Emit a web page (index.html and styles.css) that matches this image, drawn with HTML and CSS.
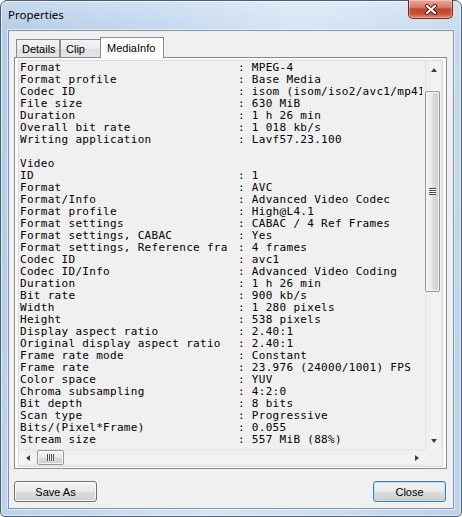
FILE: index.html
```html
<!DOCTYPE html>
<html lang="en">
<head>
<meta charset="utf-8">
<title>Properties</title>
<link rel="stylesheet" href="styles.css">
</head>
<body>
<div class="window">
  <div class="titlebar">
    <span class="title">Properties</span>
    <div class="close-btn">
      <svg width="14" height="11" viewBox="0 0 14 11">
        <path d="M3 2 L11 9 M11 2 L3 9" stroke="#5b2219" stroke-width="4.2" stroke-linecap="round" fill="none"/>
        <path d="M3 2 L11 9 M11 2 L3 9" stroke="#ffffff" stroke-width="2.2" stroke-linecap="round" fill="none"/>
      </svg>
    </div>
  </div>

  <div class="client">
    <div class="tabs">
      <div class="tab">Details</div>
      <div class="tab">Clip</div>
      <div class="tab active">MediaInfo</div>
    </div>

    <div class="panel">
      <div class="infobox">
        <div class="viewport">
          <div class="lines">
            <div class="row"><span class="k">Format</span>: MPEG-4</div>
            <div class="row"><span class="k">Format profile</span>: Base Media</div>
            <div class="row"><span class="k">Codec ID</span>: isom (isom/iso2/avc1/mp41)</div>
            <div class="row"><span class="k">File size</span>: 630 MiB</div>
            <div class="row"><span class="k">Duration</span>: 1 h 26 min</div>
            <div class="row"><span class="k">Overall bit rate</span>: 1 018 kb/s</div>
            <div class="row"><span class="k">Writing application</span>: Lavf57.23.100</div>
            <div class="row">&nbsp;</div>
            <div class="row">Video</div>
            <div class="row"><span class="k">ID</span>: 1</div>
            <div class="row"><span class="k">Format</span>: AVC</div>
            <div class="row"><span class="k">Format/Info</span>: Advanced Video Codec</div>
            <div class="row"><span class="k">Format profile</span>: High@L4.1</div>
            <div class="row"><span class="k">Format settings</span>: CABAC / 4 Ref Frames</div>
            <div class="row"><span class="k">Format settings, CABAC</span>: Yes</div>
            <div class="row"><span class="k">Format settings, Reference fra</span>: 4 frames</div>
            <div class="row"><span class="k">Codec ID</span>: avc1</div>
            <div class="row"><span class="k">Codec ID/Info</span>: Advanced Video Coding</div>
            <div class="row"><span class="k">Duration</span>: 1 h 26 min</div>
            <div class="row"><span class="k">Bit rate</span>: 900 kb/s</div>
            <div class="row"><span class="k">Width</span>: 1 280 pixels</div>
            <div class="row"><span class="k">Height</span>: 538 pixels</div>
            <div class="row"><span class="k">Display aspect ratio</span>: 2.40:1</div>
            <div class="row"><span class="k">Original display aspect ratio</span>: 2.40:1</div>
            <div class="row"><span class="k">Frame rate mode</span>: Constant</div>
            <div class="row"><span class="k">Frame rate</span>: 23.976 (24000/1001) FPS</div>
            <div class="row"><span class="k">Color space</span>: YUV</div>
            <div class="row"><span class="k">Chroma subsampling</span>: 4:2:0</div>
            <div class="row"><span class="k">Bit depth</span>: 8 bits</div>
            <div class="row"><span class="k">Scan type</span>: Progressive</div>
            <div class="row"><span class="k">Bits/(Pixel*Frame)</span>: 0.055</div>
            <div class="row"><span class="k">Stream size</span>: 557 MiB (88%)</div>
          </div>
        </div>

        <div class="vscroll">
          <div class="sb-btn"><span class="tri up"></span></div>
          <div class="sb-track v">
            <div class="thumb v-thumb"><span class="grip-h"></span></div>
          </div>
          <div class="sb-btn"><span class="tri down"></span></div>
        </div>

        <div class="hscroll">
          <div class="sb-btn"><span class="tri left"></span></div>
          <div class="sb-track h">
            <div class="thumb h-thumb"><span class="grip-v"></span></div>
          </div>
          <div class="sb-btn"><span class="tri right"></span></div>
        </div>

        <div class="corner"></div>
      </div>
    </div>

    <div class="buttons">
      <button class="btn">Save As</button>
      <button class="btn default">Close</button>
    </div>
  </div>
</div>
</body>
</html>
```

FILE: styles.css
```css
html, body {
  margin: 0;
  padding: 0;
  background: #ffffff;
}

/* ---------- window frame ---------- */
.window {
  width: 462px;
  height: 517px;
  box-sizing: border-box;
  border: 1px solid #4d5d72;
  border-radius: 7px 7px 5px 5px;
  padding: 0 7px 7px 7px;
  display: flex;
  flex-direction: column;
  background:
    linear-gradient(180deg, rgba(255,255,255,0.25) 0px, rgba(255,255,255,0) 30px),
    linear-gradient(100deg, #b4cce6 0%, #c3d8ee 30%, #d6e5f5 55%, #cfe0f2 70%, #bcd2ea 100%);
  box-shadow: inset 0 0 0 1px rgba(255,255,255,0.55);
  font-family: "Liberation Sans", Arial, sans-serif;
}

.titlebar {
  height: 29px;
  display: flex;
  align-items: flex-start;
}

.title {
  font-family: "Noto Sans", "Liberation Sans", sans-serif;
  font-size: 11.5px;
  line-height: 14px;
  color: #000;
  padding-top: 7px;
}

.close-btn {
  margin-left: auto;
  margin-right: 1px;
  margin-top: -1px;
  width: 45px;
  height: 19px;
  box-sizing: border-box;
  border: 1px solid #6e2a20;
  border-top: none;
  border-radius: 0 0 5px 5px;
  background: linear-gradient(180deg, #e8a696 0%, #d77e6b 40%, #c5452f 50%, #c84d35 75%, #dc8a6f 100%);
  box-shadow: inset 0 0 0 1px rgba(255,255,255,0.35);
  display: flex;
  align-items: center;
  justify-content: center;
}

.close-btn svg {
  display: block;
  margin-top: 1px;
}

/* ---------- client area ---------- */
.client {
  flex: 1;
  border: 1px solid #8194ad;
  box-shadow: 0 0 0 1px rgba(255,255,255,0.5);
  background: #f0f0f0;
  display: flex;
  flex-direction: column;
  padding: 0 6px 0 5px;
}

.tabs {
  display: flex;
  align-items: flex-end;
  height: 20px;
  margin-top: 6px;
  padding-left: 2px;
  position: relative;
  z-index: 1;
}

.tab {
  box-sizing: border-box;
  height: 18px;
  border: 1px solid #898c95;
  border-bottom: none;
  background: linear-gradient(180deg, #f3f3f3 0%, #ebebeb 50%, #dedede 51%, #e5e5e5 100%);
  font-size: 11px;
  line-height: 16px;
  padding: 1px 5px 0 5px;
  color: #000;
}

.tab:first-child {
  width: 44px;
}

.tab:nth-child(2) {
  width: 41px;
}

.tab.active {
  height: 21px;
  width: 64px;
  margin-left: -1px;
  margin-bottom: -1px;
  background: #ffffff;
  padding: 2px 6px 0 6px;
  text-align: left;
}

.panel {
  box-sizing: border-box;
  height: 412px;
  border: 1px solid #898c95;
  background: #fbfbfb;
  padding: 2px 3px 1px 3px;
  display: flex;
}

/* ---------- text box with scrollbars ---------- */
.infobox {
  flex: 1;
  box-sizing: border-box;
  border: 1px solid #dcdcdc;
  background: #f0f0f0;
  display: grid;
  grid-template-columns: 1fr 17px;
  grid-template-rows: 1fr 17px;
}

.viewport {
  grid-column: 1;
  grid-row: 1;
  padding: 1px 3px 0 1px;
  min-width: 0;
  min-height: 0;
}

.lines {
  height: 100%;
  overflow: hidden;
  font-family: "DejaVu Sans Mono", "Liberation Mono", monospace;
  font-size: 11px;
  letter-spacing: 0.3px;
  line-height: 12px;
  color: #000;
}

.row {
  display: flex;
  white-space: pre;
  height: 12px;
}

.k {
  flex: none;
  width: 218px;
}

.vscroll {
  grid-column: 2;
  grid-row: 1;
  display: flex;
  flex-direction: column;
  background: linear-gradient(90deg, #e3e3e3 0px, #eeeeee 2px, #f4f4f4 9px, #f1f1f1 15px, #e6e6e6 17px);
}

.hscroll {
  grid-column: 1;
  grid-row: 2;
  display: flex;
  background: linear-gradient(180deg, #e3e3e3 0px, #eeeeee 2px, #f4f4f4 9px, #f1f1f1 15px, #e6e6e6 17px);
}

.corner {
  grid-column: 2;
  grid-row: 2;
  background: #f0f0f0;
}

.sb-btn {
  flex: none;
  width: 17px;
  height: 17px;
  display: flex;
  align-items: center;
  justify-content: center;
}

.sb-track {
  flex: 1;
  position: relative;
}

.sb-track.v {
  padding-top: 13px;
}

.sb-track.h {
  padding-left: 1px;
  display: flex;
  align-items: center;
}

.thumb {
  box-sizing: border-box;
  border: 1px solid #979797;
  border-radius: 2px;
  display: flex;
  align-items: center;
  justify-content: center;
}

.v-thumb {
  width: 15px;
  height: 201px;
  margin-left: 0;
  background: linear-gradient(90deg, #f2f2f2 0%, #ebebeb 45%, #d9d9d9 55%, #d2d2d2 100%);
  box-shadow: inset 0 0 0 1px rgba(255,255,255,0.7);
}

.h-thumb {
  width: 27px;
  height: 15px;
  background: linear-gradient(180deg, #f2f2f2 0%, #ebebeb 45%, #d9d9d9 55%, #d2d2d2 100%);
  box-shadow: inset 0 0 0 1px rgba(255,255,255,0.7);
}

/* grip lines on the thumbs */
.grip-h {
  width: 7px;
  height: 7px;
  background: repeating-linear-gradient(180deg, #4b4b4b 0px, #4b4b4b 1px, #f4f4f4 1px, #f4f4f4 2px);
}

.grip-v {
  width: 7px;
  height: 7px;
  background: repeating-linear-gradient(90deg, #4b4b4b 0px, #4b4b4b 1px, #f4f4f4 1px, #f4f4f4 2px);
}

/* arrow glyphs */
.tri {
  width: 0;
  height: 0;
  border-style: solid;
}

.tri.up {
  border-width: 0 3.5px 4px 3.5px;
  border-color: transparent transparent #3e3e3e transparent;
}

.tri.down {
  border-width: 4px 3.5px 0 3.5px;
  border-color: #3e3e3e transparent transparent transparent;
}

.tri.left {
  border-width: 3.5px 4px 3.5px 0;
  border-color: transparent #3e3e3e transparent transparent;
}

.tri.right {
  border-width: 3.5px 0 3.5px 4px;
  border-color: transparent transparent transparent #3e3e3e;
}

/* ---------- dialog buttons ---------- */
.buttons {
  display: flex;
  justify-content: space-between;
  margin-top: 12px;
  padding-right: 1px;
}

.btn {
  box-sizing: border-box;
  height: 21px;
  border: 1px solid #707070;
  border-radius: 3px;
  background: linear-gradient(180deg, #f2f2f2 0%, #ebebeb 48%, #dddddd 52%, #cfcfcf 100%);
  box-shadow: inset 0 0 0 1px rgba(255,255,255,0.8);
  font-family: "Liberation Sans", Arial, sans-serif;
  font-size: 11px;
  color: #000;
  padding: 0;
  margin: 0;
}

.btn:first-child {
  width: 83px;
}

.btn.default {
  width: 73px;
  border-color: #3c7fb1;
  box-shadow: inset 0 0 0 1px #b8e3f8;
}
```
